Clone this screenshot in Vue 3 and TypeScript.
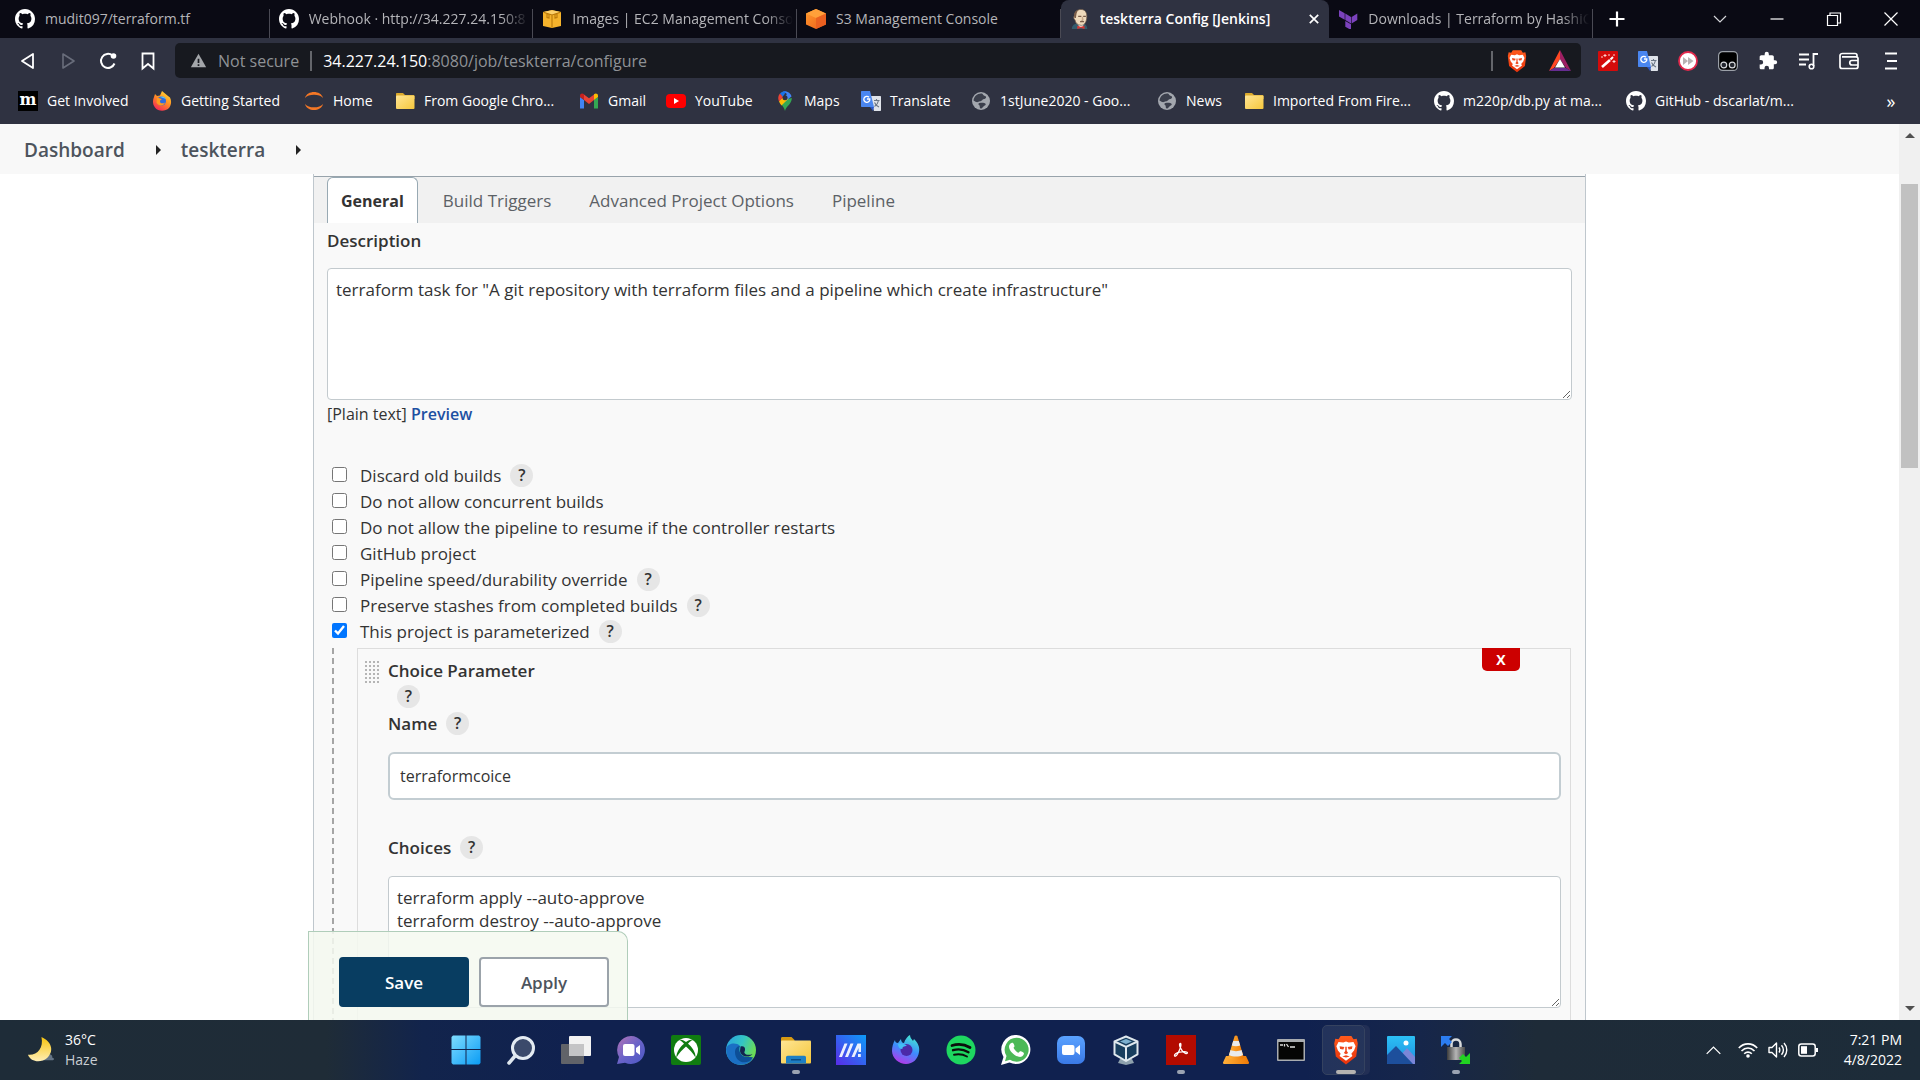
<script setup lang="ts">
import { ref } from 'vue'

interface BrowserTab { title: string; icon: string; active?: boolean; fade?: boolean }
interface Bookmark { label: string; icon: string }
interface Option { id: string; label: string; checked: boolean; help?: boolean }
interface TaskApp { name: string; icon: string; state?: 'open' | 'active' }

const browserTabs: BrowserTab[] = [
  { title: 'mudit097/terraform.tf', icon: 'github' },
  { title: 'Webhook · http://34.227.24.150:8', icon: 'github', fade: true },
  { title: 'Images | EC2 Management Conso', icon: 'ec2', fade: true },
  { title: 'S3 Management Console', icon: 's3' },
  { title: 'teskterra Config [Jenkins]', icon: 'jenkins', active: true },
  { title: 'Downloads | Terraform by HashiC', icon: 'terraform', fade: true },
]

const bookmarks: Bookmark[] = [
  { label: 'Get Involved', icon: 'mozilla' },
  { label: 'Getting Started', icon: 'firefox' },
  { label: 'Home', icon: 'jupyter' },
  { label: 'From Google Chro...', icon: 'folder' },
  { label: 'Gmail', icon: 'gmail' },
  { label: 'YouTube', icon: 'youtube' },
  { label: 'Maps', icon: 'maps' },
  { label: 'Translate', icon: 'translate' },
  { label: '1stJune2020 - Goo...', icon: 'globe' },
  { label: 'News', icon: 'globe' },
  { label: 'Imported From Fire...', icon: 'folder' },
  { label: 'm220p/db.py at ma...', icon: 'github' },
  { label: 'GitHub - dscarlat/m...', icon: 'github' },
]

const extensions: Bookmark[] = [
  { label: 'Magic wand', icon: 'wand' },
  { label: 'Google Translate', icon: 'translate' },
  { label: 'Fast forward', icon: 'forward-ext' },
  { label: 'Tampermonkey', icon: 'tamper' },
  { label: 'Extensions', icon: 'puzzle' },
  { label: 'Media', icon: 'music' },
  { label: 'Wallet', icon: 'wallet' },
  { label: 'Menu', icon: 'menu' },
]

const sections = ['General', 'Build Triggers', 'Advanced Project Options', 'Pipeline']
const section = ref('General')

const description = ref('terraform task for "A git repository with terraform files and a pipeline which create infrastructure"')
const options = ref<Option[]>([
  { id: 'discard', label: 'Discard old builds', checked: false, help: true },
  { id: 'concurrent', label: 'Do not allow concurrent builds', checked: false },
  { id: 'resume', label: 'Do not allow the pipeline to resume if the controller restarts', checked: false },
  { id: 'github-project', label: 'GitHub project', checked: false },
  { id: 'durability', label: 'Pipeline speed/durability override', checked: false, help: true },
  { id: 'stashes', label: 'Preserve stashes from completed builds', checked: false, help: true },
  { id: 'parameterized', label: 'This project is parameterized', checked: true, help: true },
])
const paramName = ref('terraformcoice')
const choices = ref('terraform apply --auto-approve\nterraform destroy --auto-approve')

const apps: TaskApp[] = [
  { name: 'Start', icon: 'windows' },
  { name: 'Search', icon: 'search' },
  { name: 'Task view', icon: 'taskview' },
  { name: 'Chat', icon: 'chat' },
  { name: 'Xbox', icon: 'xbox' },
  { name: 'Edge', icon: 'edge' },
  { name: 'File Explorer', icon: 'explorer', state: 'open' },
  { name: 'MyASUS', icon: 'asus' },
  { name: 'Firefox Developer Edition', icon: 'firefox-dev' },
  { name: 'Spotify', icon: 'spotify' },
  { name: 'WhatsApp', icon: 'whatsapp' },
  { name: 'Zoom', icon: 'zoom' },
  { name: 'VirtualBox', icon: 'virtualbox' },
  { name: 'Acrobat', icon: 'acrobat', state: 'open' },
  { name: 'VLC', icon: 'vlc' },
  { name: 'Command Prompt', icon: 'cmd' },
  { name: 'Brave', icon: 'brave', state: 'active' },
  { name: 'Photos', icon: 'photos' },
  { name: 'WinSCP', icon: 'winscp', state: 'open' },
]
</script>

<template>
  <div class="screen">
    <svg class="sprite" aria-hidden="true">
      <defs>
        <linearGradient id="g-win" x1="0" y1="0" x2="1" y2="1"><stop offset="0" stop-color="#7fdcff" /><stop offset="1" stop-color="#0a9cf5" /></linearGradient>
        <linearGradient id="g-fox" x1="0.8" y1="0" x2="0.2" y2="1"><stop offset="0" stop-color="#ffde3a" /><stop offset="0.45" stop-color="#ff9022" /><stop offset="1" stop-color="#f5205b" /></linearGradient>
        <linearGradient id="g-folder" x1="0" y1="0" x2="1" y2="1"><stop offset="0" stop-color="#ffe594" /><stop offset="1" stop-color="#f5c73c" /></linearGradient>
        <linearGradient id="g-chat" x1="0" y1="0" x2="1" y2="1"><stop offset="0" stop-color="#b573b5" /><stop offset="0.5" stop-color="#6a63c8" /><stop offset="1" stop-color="#4a57c4" /></linearGradient>
        <linearGradient id="g-edge" x1="0" y1="0" x2="1" y2="0.4"><stop offset="0" stop-color="#2a9fe2" /><stop offset="0.55" stop-color="#33c5c5" /><stop offset="1" stop-color="#6bdc57" /></linearGradient>
        <linearGradient id="g-asus" x1="0" y1="1" x2="1" y2="0"><stop offset="0" stop-color="#5a2be8" /><stop offset="1" stop-color="#0c9cf8" /></linearGradient>
        <linearGradient id="g-dev" x1="0.7" y1="0" x2="0.3" y2="1"><stop offset="0" stop-color="#45e8d0" /><stop offset="0.5" stop-color="#3d8bff" /><stop offset="1" stop-color="#b935e8" /></linearGradient>
        <linearGradient id="g-zoom" x1="0" y1="0" x2="0" y2="1"><stop offset="0" stop-color="#5aa2ff" /><stop offset="1" stop-color="#3a79e6" /></linearGradient>
        <linearGradient id="g-moon" x1="0" y1="0" x2="0" y2="1"><stop offset="0" stop-color="#f7c40c" /><stop offset="1" stop-color="#ffeeb5" /></linearGradient>
        <linearGradient id="g-cube" x1="0" y1="0" x2="1" y2="1"><stop offset="0" stop-color="#ff9c2e" /><stop offset="1" stop-color="#ee5d1a" /></linearGradient>
        <linearGradient id="g-cone" x1="0" y1="0" x2="1" y2="0"><stop offset="0" stop-color="#ffb03a" /><stop offset="1" stop-color="#ee7a06" /></linearGradient>
        <linearGradient id="g-brave" x1="0" y1="0" x2="0" y2="1"><stop offset="0" stop-color="#ff5a1c" /><stop offset="1" stop-color="#e8330c" /></linearGradient>
        <linearGradient id="g-lock" x1="0" y1="0" x2="1" y2="0"><stop offset="0" stop-color="#3c3c3c" /><stop offset="0.5" stop-color="#b5b5b5" /><stop offset="1" stop-color="#4a4a4a" /></linearGradient>
        <linearGradient id="g-photo" x1="0" y1="0" x2="0" y2="1"><stop offset="0" stop-color="#2cc0f5" /><stop offset="1" stop-color="#1e8ee0" /></linearGradient>
      </defs>

      <symbol id="github" viewBox="0 0 16 16"><path fill="#fff" d="M8 0C3.58 0 0 3.58 0 8c0 3.54 2.29 6.53 5.47 7.59.4.07.55-.17.55-.38 0-.19-.01-.82-.01-1.49-2.01.37-2.53-.49-2.69-.94-.09-.23-.48-.94-.82-1.13-.28-.15-.68-.52-.01-.53.63-.01 1.08.58 1.23.82.72 1.21 1.87.87 2.33.66.07-.52.28-.87.51-1.07-1.78-.2-3.64-.89-3.64-3.95 0-.87.31-1.59.82-2.15-.08-.2-.36-1.02.08-2.12 0 0 .67-.21 2.2.82.64-.18 1.32-.27 2-.27s1.36.09 2 .27c1.53-1.04 2.2-.82 2.2-.82.44 1.1.16 1.92.08 2.12.51.56.82 1.27.82 2.15 0 3.07-1.87 3.75-3.65 3.95.29.25.54.73.54 1.48 0 1.07-.01 1.93-.01 2.2 0 .21.15.46.55.38A8.01 8.01 0 0 0 16 8c0-4.42-3.58-8-8-8z" /></symbol>
      <symbol id="ec2" viewBox="0 0 20 20"><path fill="#f5b32c" d="M1 3l9-2 9 2v14l-9 2-9-2z" /><path fill="#fcd06a" d="M1.500 3L10 1.200 18.500 3 10 6z" /><path fill="none" stroke="#b9780a" stroke-width="1.100" d="M1.500 3.200L10 6l8.500-2.800M10 6v12.500M5 4.500v4l2 .500V5M15 4.500v4l-2 .500V5" /></symbol>
      <symbol id="s3" viewBox="0 0 20 20"><path fill="url(#g-cube)" d="M10 0l10 4.500v11L10 20 0 15.500v-11z" /><path fill="#ffa03a" d="M10 0l10 4.500L10 9 0 4.500z" /><path fill="#e95d20" d="M10 9l10-4.500v11L10 20z" opacity=".8" /></symbol>
      <symbol id="jenkins" viewBox="0 0 20 22"><path fill="#335b6c" d="M1 22c0-4 3-6 7-6h5c3 0 5 3 5 6z" /><path fill="#fff" d="M8 16h6l-1 5H9z" /><path fill="#eed9bb" stroke="#6b5847" stroke-width=".8" d="M4 7c0-4 3-6.500 7-6.500S17.500 3 17.500 8c0 6-2.500 10-6 10C7 18 5 15 4.500 12 2.500 11 3 8 4 7z" /><path fill="#7a5c48" d="M4 10C2.500 5 5 1.500 8.500 1 6 3 6 6 5.500 10zM8 7.500h3.500v1.300H8zM13.500 7.500h3v1.300h-3zM10 13.500c2-1 3-1 4.500 0v1H10z" /><path fill="#c9a98a" d="M12 8.500h1.200l.8 3.500h-2z" /><path fill="#d33833" d="M7 18.500l4 1 4-1v3.500l-4-1-4 1z" /></symbol>
      <symbol id="terraform" viewBox="0 0 20 20"><path fill="#7b42bc" d="M1 1l5.700 3.200v6.500L1 7.500zM7.300 4.600L13 7.900v6.500l-5.700-3.300zM13.600 7.900l5.700-3.300v6.500l-5.700 3.300zM7.300 12l5.700 3.300V21l-5.700-3.300z" /></symbol>
      <symbol id="firefox" viewBox="0 0 20 20"><path fill="url(#g-fox)" d="M2 6l1-3 2 2 3-.500L10 0c2 2 4 3 6 5l2 1.500c2 4 1 8-1 10.500-4 4-11 3.500-14-.500C.500 13.500.500 9 2 6z" /><circle cx="9.500" cy="10" r="4.500" fill="#2d6be0" /><path fill="#ff9b1e" d="M5 7c2 0 3 .500 5 1-1 1-2 1-2 2.500 0 2 3 2.500 5 1-1 4-7 4-8.500 0z" /><path fill="#58c8f8" d="M8 6c2-1.500 5 0 6 2-2-1-4-1-6-2z" /></symbol>
      <symbol id="jupyter" viewBox="0 0 20 20"><path fill="#f37726" d="M1 7C2 3 6 1 10 1s8 2 9 6c-2-2.500-5-3.300-9-3.300S3 4.500 1 7zM1 13c1 4 5 6 9 6s8-2 9-6c-2 2.500-5 3.300-9 3.300S3 15.500 1 13z" /></symbol>
      <symbol id="folder" viewBox="0 0 20 20"><path fill="#dcaa2c" d="M1 3c0-.600.400-1 1-1h6l2 2h8.500c.500 0 1 .500 1 1v3H1z" /><rect x="1" y="4.500" width="18.500" height="13.500" rx="1" fill="url(#g-folder)" /></symbol>
      <symbol id="gmail" viewBox="0 0 20 16"><path fill="#4285f4" d="M1 15.500h4V7L1 4z" /><path fill="#34a853" d="M15 15.500h4V4l-4 3z" /><path fill="#ea4335" d="M5 7V1.500l5 3.800 5-3.800V7l-5 4z" /><path fill="#c5221f" d="M1 4V2.500C1 .500 3.500-.200 5 1.200V7z" /><path fill="#fbbc04" d="M19 4V2.500c0-2-2.500-2.700-4-1.300V7z" /></symbol>
      <symbol id="youtube" viewBox="0 0 20 20"><rect y="3" width="20" height="14" rx="4" fill="#f00" /><path fill="#fff" d="M8 7l5 3-5 3z" /></symbol>
      <symbol id="maps" viewBox="0 0 20 20"><path fill="#34a853" d="M4 10c1 3 5 5 6 10 1-5 7-7 6.800-13z" /><path fill="#4285f4" d="M8 .500c4-1 8 2 8.500 5L7 13l-2-2L12 3z" /><path fill="#fbbc04" d="M4 10l5-5 4 3-6.500 6.500C5.500 13 4.500 12 4 10z" /><path fill="#ea4335" d="M5 2.500L8.500 6 4 10.500C2.500 7 3.500 4 5 2.500z" /><path fill="#1a73e8" d="M5 2.500C6.500.700 9 0 11 .200L8 6z" /><circle cx="10" cy="6.800" r="2.500" fill="#2c3040" /></symbol>
      <symbol id="translate" viewBox="0 0 20 20"><path fill="#dfe3ea" d="M8 5h11c.600 0 1 .400 1 1v13c0 .600-.400 1-1 1h-6z" /><path fill="#4a86f0" d="M1 0h8l4 16H1c-.600 0-1-.400-1-1V1c0-.600.400-1 1-1z" /><path fill="#2a56c6" d="M9 16h4l-1 4z" /><path fill="none" stroke="#fff" stroke-width="1.300" d="M8 6.300A3 3 0 1 0 8.800 8H6" /><path fill="none" stroke="#6b7685" stroke-width="1.100" d="M13 9.500h5.500M15.500 8v1.500M17.500 9.500c-.500 3-2.500 5-4 6M13.500 11.500c1 2 2.500 3.500 4.500 4.500" /></symbol>
      <symbol id="globe" viewBox="0 0 20 20"><circle cx="10" cy="10" r="9" fill="#a3a7ae" /><path fill="#3b3f4c" d="M11 2.500c1.500 1 1 2 3 2.500 2 .500 1 3-1 3-2 .300-1.500 2-4 2.300-1.500.200-2 1.200-4 .700L2.500 9.500C3 5 6.500 2 11 2.500zM8.500 12c2-.500 5-.500 6 .800 1 1.200-1 1.700-2 2.700S10.500 18 9.500 17.500C8 16.500 9.500 15 8 14c-1-.600-.700-1.700.500-2z" /></symbol>

      <symbol id="back" viewBox="0 0 20 20"><path fill="none" stroke="#fff" stroke-width="1.800" stroke-linejoin="round" d="M15 3L4 10l11 7z" /></symbol>
      <symbol id="next" viewBox="0 0 20 20"><path fill="none" stroke="#696d7b" stroke-width="1.600" stroke-linejoin="round" d="M5 3l11 7-11 7z" /></symbol>
      <symbol id="reload" viewBox="0 0 20 20"><path fill="none" stroke="#fff" stroke-width="2" d="M16.500 12.500A7 7 0 1 1 14.500 4.500" /><circle cx="15.500" cy="5" r="2.800" fill="#fff" /></symbol>
      <symbol id="bookmark" viewBox="0 0 20 20"><path fill="none" stroke="#fff" stroke-width="1.800" d="M4.500 2.500h11v15L10 13l-5.500 4.500z" /></symbol>
      <symbol id="warning" viewBox="0 0 20 20"><path fill="#a3a6aa" d="M10 2l9 16H1z" /><path fill="#17191f" d="M9 8h2v5H9zM9 14.500h2v2H9z" /></symbol>
      <symbol id="brave" viewBox="0 0 24 28"><path fill="url(#g-brave)" d="M7 1h10l2 3 3-.500L23 8l-1.500 12L12 27.500 2.500 20 1 8l1-4.500L5 4z" /><path fill="#fff" d="M5 6.500l4.500.500L12 6l2.500 1 4.500-.500 2 4-1.500 4-2.500 3 1 2L12 24l-6-4.500 1-2-2.500-3-1.500-4z" /><path fill="#f0461a" d="M6 10.500l4.500.800-1 2.200-3-.500zM18 10.500l-4.500.800 1 2.200 3-.500zM11.300 11h1.400v4l1.300 1.800-2 1.200-2-1.200 1.300-1.800zM8.500 20l3.500-1.200 3.500 1.200-3.500 1z" /></symbol>
      <symbol id="bat" viewBox="0 0 22 22"><path fill="#ff4724" d="M11 0L0 21l5-3 6-9z" /><path fill="#9e1f63" d="M11 0l11 21-5-3-6-9z" /><path fill="#662d91" d="M0 21h22l-5-3H5z" /><path fill="#fff" d="M11 9l5 8.500H6z" /></symbol>
      <symbol id="wand" viewBox="0 0 20 20"><rect width="20" height="20" rx="1" fill="#d40b0b" /><path stroke="#fff" stroke-width="2.600" d="M4 16l8-7" /><path stroke="#fff" stroke-width="2" d="M12.500 8.500L15 6" /><path stroke="#ffd3d3" d="M7 3v3M5.500 4.500h3M11 3v2M16 9v3M14.500 10.500h3M3 6h2M16 3v2" /></symbol>
      <symbol id="forward-ext" viewBox="0 0 20 20"><circle cx="10" cy="10" r="9" fill="#fff" stroke="#e3294c" stroke-width="1.800" /><path fill="#b9b3b3" d="M5 6l5 4-5 4zM10 6l5.500 4-5.500 4z" /></symbol>
      <symbol id="tamper" viewBox="0 0 20 20"><rect x=".600" y=".600" width="18.800" height="18.800" rx="4" fill="#000" stroke="#9ba0a8" stroke-width="1.200" /><circle cx="5.800" cy="14" r="2.900" fill="#23262e" stroke="#d7d9dc" stroke-width="1.200" /><circle cx="14.200" cy="14" r="2.900" fill="#23262e" stroke="#d7d9dc" stroke-width="1.200" /></symbol>
      <symbol id="puzzle" viewBox="0 0 24 24"><path fill="#fff" d="M20.500 11H19V7c0-1.100-.900-2-2-2h-4V3.500a2.500 2.500 0 0 0-5 0V5H4c-1.100 0-2 .900-2 2v3.800h1.500a2.700 2.700 0 0 1 0 5.400H2V20c0 1.100.900 2 2 2h3.800v-1.500a2.700 2.700 0 0 1 5.400 0V22H17c1.100 0 2-.900 2-2v-4h1.500a2.500 2.500 0 0 0 0-5z" /></symbol>
      <symbol id="music" viewBox="0 0 20 20"><path fill="none" stroke="#fff" stroke-width="1.800" d="M1 3.500h10M1 8.500h10M1 13.500h7M15.500 15V3H20" /><circle cx="13.500" cy="15.500" r="2.300" fill="none" stroke="#fff" stroke-width="1.600" /></symbol>
      <symbol id="wallet" viewBox="0 0 20 20"><path fill="none" stroke="#fff" stroke-width="1.700" stroke-linejoin="round" d="M18 6V4.500C18 3 17 2.500 16 2.500H3.500C2 2.500 1 3.500 1 4.500v11c0 1.300 1 2 2 2h14c1.300 0 2-.700 2-2V7.500c0-1-.700-1.700-2-1.700H3M19 9.500h-6a2.200 2.200 0 0 0 0 4.500h6" /></symbol>
      <symbol id="menu" viewBox="0 0 20 20"><path stroke="#fff" stroke-width="1.800" d="M4 2.500h12M6 10h10M4 17.500h12" /></symbol>
      <symbol id="plus" viewBox="0 0 20 20"><path stroke="#fff" stroke-width="2.200" d="M10 2.500v15M2.500 10h15" /></symbol>
      <symbol id="chevron-down" viewBox="0 0 20 20"><path fill="none" stroke="#d5d6da" stroke-width="1.200" d="M4 7l6 6 6-6" /></symbol>
      <symbol id="minimise" viewBox="0 0 20 20"><path stroke="#fff" stroke-width="1.200" d="M3.500 10h13" /></symbol>
      <symbol id="restore" viewBox="0 0 20 20"><path fill="none" stroke="#fff" stroke-width="1.200" d="M3.500 6.500h10v10h-10zM6 6.500v-2.500h10.500v10h-3" /></symbol>
      <symbol id="close" viewBox="0 0 20 20"><path stroke="#fff" stroke-width="1.200" d="M3.500 3.500l13 13M16.500 3.500l-13 13" /></symbol>
      <symbol id="tab-close" viewBox="0 0 20 20"><path stroke="#fff" stroke-width="2.800" d="M3 3l14 14M17 3L3 17" /></symbol>

      <symbol id="windows" viewBox="0 0 30 30"><path fill="url(#g-win)" d="M2 .500h12.500V14H.500V2zM15.500.500h12.500l1.500 1.500v12H15.500zM.500 15h14v14.500H2L.500 28zM15.500 15h14v13L28 29.500H15.500z" /></symbol>
      <symbol id="search" viewBox="0 0 30 30"><circle cx="17" cy="13" r="10.500" fill="#3b4a6b" stroke="#e4ebf2" stroke-width="3" /><path stroke="#dfe7ee" stroke-width="3.500" stroke-linecap="round" d="M9 21l-6 7" /></symbol>
      <symbol id="taskview" viewBox="0 0 30 30"><rect x="8" y="1" width="22" height="20" rx="1" fill="#f2f2f2" /><rect x="0" y="9" width="23" height="20" rx="1" fill="#6a6a6c" fill-opacity=".9" /><rect x="8" y="9" width="15" height="12" fill="#c4c4c6" /></symbol>
      <symbol id="chat" viewBox="0 0 30 30"><path fill="url(#g-chat)" d="M15 1a14 14 0 1 1-6 26.700L1 29l2-7A14 14 0 0 1 15 1z" /><rect x="7" y="9" width="11.500" height="12" rx="2" fill="#fff" /><path fill="#fff" d="M20 13l4-3v10l-4-3z" /></symbol>
      <symbol id="xbox" viewBox="0 0 30 30"><rect width="30" height="30" rx="2" fill="#107c10" /><circle cx="15" cy="15" r="12" fill="#fff" /><path fill="#107c10" d="M8 5c3-1 5 .500 7 2 2-1.500 4-3 7-2-2 .500-3.500 2-5 3.800C21 12 25 18 24.500 22.500 22 18 18 14 15 11.500 12 14 8 18 5.500 22.500 5 18 9 12 13 8.800 11.500 7 10 5.500 8 5z" /></symbol>
      <symbol id="edge" viewBox="0 0 30 30"><circle cx="15" cy="15" r="15" fill="url(#g-edge)" /><path fill="#1b6fc4" d="M0 14c2-6 10-7 14-3-5 3-4 10 1 13 4 2.500 9 1.500 12-.500C22 32 5 33 1 20z" /><path fill="#0d4f97" d="M9 17c0-3 2-6 5-6-2 5 1 11 8 11 2 0 4-.500 5 .500-5 8-18 6-18-5.500z" /><path fill="#13244f" d="M14.500 11.500c3-1 5 1 4.500 3.500-.200 1.500-1 2-.500 3 1 2 5 2.500 8 1-4 5-12 2-12.500-3z" /></symbol>
      <symbol id="explorer" viewBox="0 0 30 30"><path fill="#d79a13" d="M0 3.500C0 2.500.500 2 1.500 2h9l3 3V9H0z" /><rect y="5.500" width="30" height="23" rx="1" fill="url(#g-folder)" /><path fill="#1e7fc4" d="M5 28.500v-6c0-1 .700-1.700 1.700-1.700h16.600c1 0 1.700.700 1.700 1.700v6z" /><rect x="10" y="24" width="10" height="1.500" fill="#0b4c85" /></symbol>
      <symbol id="asus" viewBox="0 0 30 30"><rect width="30" height="30" fill="url(#g-asus)" /><path fill="#fff" d="M3 22L8.500 8.500h3L6 22zM9 22l5.500-13.500h3L12 22zM15.500 22L21.500 8.500H25V17h-2.500v-4L18.500 22zM22 19h2.800v3H22z" opacity=".9" /></symbol>
      <symbol id="firefox-dev" viewBox="0 0 30 30"><path fill="url(#g-dev)" d="M4 5c0 2 1 3 3 3l3-4c0 2 1 4 3 4C14 4 17 1 19 0c0 3 2 4 3 6l1-2c4 4 6 8 5 13-1 7-6 12-13 12S1 23 1 16c0-4 1-8 3-11z" /><circle cx="15.500" cy="15" r="6" fill="#4b2aa8" /><path fill="#43bdf5" d="M7 9c4-1 7 0 9 2-3 0-5 1-4.500 3-3 0-4.500-2-4.500-5z" /></symbol>
      <symbol id="spotify" viewBox="0 0 30 30"><circle cx="15" cy="15" r="14.500" fill="#1ed760" /><path fill="none" stroke="#0b0f0c" stroke-linecap="round" d="M6 10.500c6-2 13-1 18 2" stroke-width="2.800" /><path fill="none" stroke="#0b0f0c" stroke-linecap="round" d="M7 15.200c5-1.500 11-.700 15.500 2" stroke-width="2.300" /><path fill="none" stroke="#0b0f0c" stroke-linecap="round" d="M8 19.700c4.500-1 9-.500 13 1.800" stroke-width="1.900" /></symbol>
      <symbol id="whatsapp" viewBox="0 0 30 30"><path fill="#fff" d="M15.500 0a14.500 14.500 0 1 1-7 27.500L0 30l2.500-8A14.500 14.500 0 0 1 15.500 0z" /><path fill="#4cb957" d="M15.500 2.700a12 12 0 1 1-6.500 22l-5 1.500L5.500 21a12 12 0 0 1 10-18.300z" /><path fill="#fff" d="M10.500 8c1-.500 2 0 2.500 1.500.700 1.800.700 2-.500 3.300 1.200 2.500 2.800 4 5 5 1.200-1.800 1.700-2 3-1.300 2.200 1 2.700 1.300 2.300 2.800-.600 2-3 3-5 2.500-5-1-9.500-6-9.800-10 0-1.700 1-3.200 2.500-3.800z" /></symbol>
      <symbol id="zoom" viewBox="0 0 30 30"><rect x="1" y="1" width="28" height="28" rx="7" fill="url(#g-zoom)" /><rect x="6" y="10" width="12.500" height="10" rx="2" fill="#fff" /><path fill="#fff" d="M19.500 13.500L24 10v10l-4.500-3.500z" /></symbol>
      <symbol id="virtualbox" viewBox="0 0 30 30"><path fill="#8da0ad" d="M9 24h12l2 4-8 2-8-2z" /><path fill="#183e5e" stroke="#dfe8ee" stroke-width="2" stroke-linejoin="round" d="M15 1.500l11.500 4.800v13L15 26 3.500 19.300v-13z" /><path fill="none" stroke="#dfe8ee" stroke-width="2" d="M3.500 6.500L15 12l11.500-5.500M15 12v14" /><path fill="#7db0cf" d="M15 4l6 2.500-6 2.500-6-2.500z" /></symbol>
      <symbol id="acrobat" viewBox="0 0 30 30"><rect width="30" height="30" fill="#b30b00" /><path fill="none" stroke="#fff" stroke-width="1.300" d="M14.500 8.500c-1.500 0-1 2.500 0 4.500 1 2.500 3 4.500 5 5.500 1.500.500 2.500-.500 1.500-1.300-1.500-1-5-.600-7.500 0s-5 2-5 3.300 1.800.700 3-1.500 3-6 3.300-8c.200-1.500 0-2.500-.300-2.500z" /></symbol>
      <symbol id="vlc" viewBox="0 0 30 30"><path fill="url(#g-cone)" d="M5 21h20l3 6.500c.200.700-.200 1.500-1 1.500H3c-.800 0-1.200-.800-1-1.500z" /><path fill="url(#g-cone)" d="M13.500 1.500c.500-1.500 2.500-1.500 3 0L23 23c-4 2.500-12 2.500-16 0z" /><path fill="#e9eaec" d="M12.200 6h5.600l1.400 4.500c-2.500 1-6 1-8.400 0zM9.500 15c3 1.500 8 1.500 11 0l1.500 5c-4 2-10 2-14 0z" /></symbol>
      <symbol id="cmd" viewBox="0 0 30 30"><rect x="1" y="4" width="28" height="22" rx="1" fill="#a9acb0" /><rect x="2.500" y="7" width="25" height="17.500" fill="#050505" /><path stroke="#dcdcdc" stroke-width="1.300" d="M4 10h3M8.500 9v2.500M10.500 9l2 3M14 12h5" /></symbol>
      <symbol id="photos" viewBox="0 0 30 30"><rect x="1" y="1" width="28" height="28" rx="1" fill="url(#g-photo)" /><path fill="#7a86d8" d="M13 22l8-9 8 9v7H13z" /><path fill="#1d4f9c" d="M1 20l9-9 17 18H2c-.600 0-1-.400-1-1z" /><circle cx="20" cy="8" r="2.500" fill="#fff" /></symbol>
      <symbol id="winscp" viewBox="0 0 30 30"><path fill="none" stroke="#d9dbdd" stroke-width="2.500" d="M10.500 14V9c0-6 9-6 9 0v5" /><rect x="6" y="12" width="18" height="13" fill="url(#g-lock)" /><path fill="#2c7df0" d="M0 1h11L8 4l3 3-4 4-3-3-4 4z" /><path fill="#21d321" d="M29 29H18l3-3-3-3 4-4 3 3 4-4z" /></symbol>
      <symbol id="moon" viewBox="0 0 30 30"><path fill="#75879a" d="M16 26c-1-3 3-6 6-5 1-3 6-1 5 2 3 1 2 3 0 3z" opacity=".8" /><path fill="url(#g-moon)" d="M15.500 1c11 5 14 15 6 22.500C15 29 4 28 1 20c10 1 17-7 14.500-19z" /></symbol>
      <symbol id="chevron-up" viewBox="0 0 20 20"><path fill="none" stroke="#fff" stroke-width="1.500" d="M2 14l8-8 8 8" /></symbol>
      <symbol id="wifi" viewBox="0 0 20 20"><path fill="none" stroke="#fff" stroke-width="1.600" d="M.800 8c5-5.500 13.400-5.500 18.400 0M3.500 11c3.800-4 9.200-4 13 0M6.200 13.800c2.300-2.300 5.300-2.300 7.600 0" /><circle cx="10" cy="16" r="1.800" fill="#fff" /></symbol>
      <symbol id="volume" viewBox="0 0 20 20"><path fill="none" stroke="#fff" stroke-width="1.400" stroke-linejoin="round" d="M1 7.500h3l4.500-4.500v14L4 12.500H1zM11 7.500c1 1.500 1 3.500 0 5M13.500 5.300c2.300 2.800 2.300 6.600 0 9.400M16 3c3.700 4 3.700 10 0 14" /></symbol>
      <symbol id="battery" viewBox="0 0 20 20"><rect x=".800" y="4" width="16.400" height="12" rx="2.500" fill="none" stroke="#fff" stroke-width="1.500" /><rect x="3" y="6.200" width="6" height="7.600" fill="#fff" /><path fill="#fff" d="M18 8h2v4h-2z" /></symbol>
    </svg>

    <header class="browser">
      <div class="tabstrip">
        <div class="tabs" role="tablist">
          <button v-for="t in browserTabs" :key="t.title" type="button" role="tab" class="tab" :class="{ active: t.active }" :aria-selected="!!t.active">
            <svg class="icon20"><use :href="'#' + t.icon" /></svg>
            <span class="tab-title" :class="{ fade: t.fade }">{{ t.title }}</span>
            <svg v-if="t.active" class="icon12"><use href="#tab-close" /></svg>
          </button>
        </div>
        <button type="button" class="plain new-tab" aria-label="New tab"><svg class="icon20"><use href="#plus" /></svg></button>
        <div class="window-controls">
          <button type="button" class="plain" aria-label="Search tabs"><svg class="icon20"><use href="#chevron-down" /></svg></button>
          <button type="button" class="plain" aria-label="Minimise"><svg class="icon20"><use href="#minimise" /></svg></button>
          <button type="button" class="plain" aria-label="Restore"><svg class="icon20"><use href="#restore" /></svg></button>
          <button type="button" class="plain" aria-label="Close"><svg class="icon20"><use href="#close" /></svg></button>
        </div>
      </div>

      <div class="toolbar">
        <nav class="nav-buttons">
          <button type="button" class="plain" aria-label="Back"><svg class="icon20"><use href="#back" /></svg></button>
          <button type="button" class="plain" aria-label="Forward"><svg class="icon20"><use href="#next" /></svg></button>
          <button type="button" class="plain" aria-label="Reload"><svg class="icon20"><use href="#reload" /></svg></button>
          <button type="button" class="plain" aria-label="Bookmark"><svg class="icon20"><use href="#bookmark" /></svg></button>
        </nav>
        <div class="address">
          <svg class="icon17"><use href="#warning" /></svg>
          <span class="insecure">Not secure</span>
          <span class="bar"></span>
          <span class="url"><b>34.227.24.150</b>:8080/job/teskterra/configure</span>
          <span class="bar end"></span>
          <svg class="shield"><use href="#brave" /></svg>
          <svg class="bat"><use href="#bat" /></svg>
        </div>
        <div class="extensions">
          <button v-for="e in extensions" :key="e.label" type="button" class="plain" :aria-label="e.label">
            <svg class="icon20"><use :href="'#' + e.icon" /></svg>
          </button>
        </div>
      </div>

      <nav class="bookmarks">
        <a v-for="b in bookmarks" :key="b.label" href="#" class="bookmark">
          <span v-if="b.icon === 'mozilla'" class="mozilla" aria-hidden="true">m</span>
          <svg v-else class="icon20"><use :href="'#' + b.icon" /></svg>
          <span>{{ b.label }}</span>
        </a>
        <button type="button" class="plain more" aria-label="More bookmarks">»</button>
      </nav>
    </header>

    <div class="viewport">
      <div class="page">
        <nav class="breadcrumbs">
          <a href="#">Dashboard</a><span class="arrow"></span>
          <a href="#">teskterra</a><span class="arrow"></span>
        </nav>

        <main class="content">
          <form class="panel" @submit.prevent>
            <div class="sections">
              <button v-for="s in sections" :key="s" type="button" class="section" :class="{ current: s === section }" @click="section = s">{{ s }}</button>
            </div>
            <div class="body">
              <label class="heading" for="description">Description</label>
              <textarea id="description" v-model="description" class="area"></textarea>
              <p class="preview">[Plain text] <a href="#">Preview</a></p>

              <div class="options">
                <div v-for="o in options" :key="o.id" class="option">
                  <input :id="o.id" v-model="o.checked" type="checkbox">
                  <label :for="o.id">{{ o.label }}</label>
                  <button v-if="o.help" type="button" class="help" :aria-label="'Help for ' + o.label">?</button>
                </div>
              </div>

              <div class="nested">
                <div class="parameter">
                  <span class="grip"></span>
                  <button type="button" class="remove">X</button>
                  <h3 class="heading">Choice Parameter</h3>
                  <div class="row"><button type="button" class="help" aria-label="Help for Choice Parameter">?</button></div>
                  <div class="row"><label class="heading" for="param-name">Name</label><button type="button" class="help" aria-label="Help for Name">?</button></div>
                  <input id="param-name" v-model="paramName" type="text" class="field">
                  <div class="row"><label class="heading" for="choices">Choices</label><button type="button" class="help" aria-label="Help for Choices">?</button></div>
                  <textarea id="choices" v-model="choices" class="area"></textarea>
                </div>
              </div>
            </div>
          </form>
          <div class="actions">
            <button type="button" class="save">Save</button>
            <button type="button" class="apply">Apply</button>
          </div>
        </main>
      </div>
      <div class="scrollbar"><span class="up"></span><span class="thumb"></span><span class="down"></span></div>
    </div>

    <footer class="taskbar">
      <div class="weather">
        <svg class="icon28"><use href="#moon" /></svg>
        <div><div>36°C</div><div class="dim">Haze</div></div>
      </div>
      <div class="apps">
        <button v-for="a in apps" :key="a.name" type="button" class="app" :class="a.state" :aria-label="a.name">
          <svg class="icon30"><use :href="'#' + a.icon" /></svg>
        </button>
      </div>
      <div class="tray">
        <svg class="icon17"><use href="#chevron-up" /></svg>
        <svg class="icon20"><use href="#wifi" /></svg>
        <svg class="icon20"><use href="#volume" /></svg>
        <svg class="icon20"><use href="#battery" /></svg>
        <div class="clock"><div>7:21 PM</div><div>4/8/2022</div></div>
      </div>
    </footer>
  </div>
</template>

<style>
body { margin: 0; }
</style>

<style scoped>
.screen {
  display: flex;
  flex-direction: column;
  height: 100vh;
  overflow: hidden;
  font-family: "Open Sans", "Noto Sans", sans-serif;
  font-size: 16px;
  color: #333;
  background: #fff;
}
*, *::before, *::after { box-sizing: border-box; }
button, input, textarea { font-family: inherit; }
svg { flex: none; display: block; }
a { text-decoration: none; }
.sprite { position: absolute; width: 0; height: 0; }
.icon12 { width: 12px; height: 12px; }
.icon17 { width: 17px; height: 17px; }
.icon20 { width: 20px; height: 20px; }
.icon28 { width: 28px; height: 28px; }
.icon30 { width: 30px; height: 30px; }
.plain {
  display: flex;
  align-items: center;
  justify-content: center;
  padding: 0;
  border: 0;
  background: none;
  color: #fff;
}

.browser { flex: none; background: #2f3241; color: #fff; font-size: 14px; }
.tabstrip { display: flex; height: 38px; padding-left: 6px; background: #0a0a14; }
.tabs { display: flex; flex: 0 1 1587px; min-width: 0; }
.tab {
  display: flex;
  flex: 1 1 0;
  align-items: center;
  gap: 10px;
  min-width: 0;
  padding: 0 4px 1px 9px;
  border: 0;
  background: linear-gradient(#4a4a54, #4a4a54) right bottom / 1px 29px no-repeat;
  color: #b4b4b8;
  font-size: 14px;
  text-align: left;
}
.tab.active { padding-right: 9px; border-radius: 8px 8px 0 0; background: #2f3241; color: #fff; font-weight: 600; }
.tab-title { flex: 1; min-width: 0; overflow: hidden; white-space: nowrap; }
.tab-title.fade { mask-image: linear-gradient(90deg, #000 calc(100% - 28px), transparent); }
.new-tab { width: 48px; }
.window-controls { display: flex; margin-left: auto; padding-right: 1px; }
.window-controls button { width: 57px; }

.toolbar { display: flex; align-items: center; height: 45px; }
.nav-buttons { display: flex; width: 175px; padding-left: 8px; }
.nav-buttons button { width: 40px; }
.address {
  display: flex;
  flex: 1;
  align-items: center;
  min-width: 0;
  height: 35px;
  padding: 0 10px 0 15px;
  border-radius: 5px;
  background: #17191f;
  color: #8f9296;
  font-size: 16px;
}
.insecure { margin-left: 11px; white-space: nowrap; }
.bar { width: 2px; height: 20px; margin: 0 11px; background: #64666b; }
.url { white-space: nowrap; }
.url b { color: #fff; font-weight: 400; }
.bar.end { margin: 0 14px 0 auto; }
.shield { width: 20px; height: 24px; }
.bat { width: 22px; height: 22px; margin-left: 22px; }
.extensions { display: flex; padding: 0 8px 0 7px; }
.extensions button { width: 40px; }
.extensions button:nth-last-child(-n + 2) { width: 42px; }

.bookmarks {
  display: grid;
  grid-template-columns: 134px 152px 91px 184px 87px 109px 86px 110px 186px 87px 190px 192px 1fr 42px;
  align-items: center;
  height: 41px;
  padding: 0 8px 6px 18px;
}
.bookmark { display: flex; align-items: center; gap: 9px; color: #fff; white-space: nowrap; }
.mozilla {
  width: 20px;
  height: 20px;
  background: #000;
  font-family: "DejaVu Serif", serif;
  font-size: 16px;
  font-weight: 700;
  line-height: 18px;
  display: flex;
  justify-content: center;
}
.more { font-size: 18px; }

.viewport { display: flex; flex: 1; min-height: 0; }
.page { display: flex; flex: 1; flex-direction: column; min-width: 0; }
.breadcrumbs {
  display: flex;
  flex: none;
  align-items: center;
  height: 50px;
  padding: 1px 0 0 24px;
  background: #f8f8f8;
  font-size: 19px;
  font-weight: 600;
}
.breadcrumbs a { color: #4d545d; }
.arrow { margin: 0 20px 0 31px; border: 5px solid transparent; border-left-color: #222; border-right: 0; }

.content { position: relative; flex: 1; min-height: 0; padding: 0 313px; }
.panel {
  height: 100%;
  overflow: hidden;
  border: solid #bfc7cd;
  border-width: 0 1px;
  background: #f9f9f9;
}
.sections {
  display: flex;
  height: 47px;
  margin-top: 2px;
  padding-left: 13px;
  border-top: 1px solid #98a3ab;
  background: #f1f1f1;
}
.section {
  padding: 0 13px;
  border: 0;
  background: none;
  color: #5c6166;
  font-size: 17px;
}
.section + .section { margin-left: 12px; }
.section.current {
  border: solid #98a9b3;
  border-width: 1px 1px 0;
  border-radius: 6px 6px 0 0;
  background: #fff;
  color: #333;
  font-size: 16px;
  font-weight: 700;
}
.body { display: flex; flex-direction: column; padding: 6px 13px 0; }
.heading { margin: 0; font-size: 17px; font-weight: 600; line-height: 24px; }
.area {
  display: block;
  width: 100%;
  height: 132px;
  margin: 15px 0 0;
  padding: 9px 8px;
  border: 1px solid #c3cace;
  border-radius: 4px;
  background: #fff;
  color: #333;
  font-size: 17px;
  line-height: 23px;
  resize: vertical;
}
.preview { margin: 2px 0 0; font-size: 16px; line-height: 24px; }
.preview a { color: #1e50a2; font-weight: 600; }
.options { margin-top: 36px; font-size: 17px; }
.option { display: flex; align-items: center; height: 26px; }
.option input { width: 15px; height: 15px; margin: 0 13px 2px 5px; }
.help {
  flex: none;
  width: 23px;
  height: 23px;
  margin-left: 9px;
  padding: 0;
  border: 0;
  border-radius: 50%;
  background: #e6e6e6;
  color: #333;
  font-size: 16px;
  font-weight: 600;
  line-height: 23px;
}
.nested {
  margin: 4px 1px 0 5px;
  padding-left: 25px;
  background: repeating-linear-gradient(#a5a5a5 0 6px, transparent 6px 10px) left top / 2px 100% no-repeat;
}
.parameter { position: relative; padding: 10px 9px 40px 30px; border: 1px solid #ddd; }
.grip {
  position: absolute;
  top: 11px;
  left: 6px;
  width: 15px;
  height: 25px;
  background: radial-gradient(circle, #b5b5b5 1px, transparent 1px) 0 0 / 4px 4px;
}
.remove {
  position: absolute;
  top: -1px;
  right: 50px;
  width: 38px;
  height: 23px;
  padding: 0;
  border: 0;
  border-radius: 0 0 5px 5px;
  background: #c00;
  color: #fff;
  font-size: 14px;
  font-weight: 700;
}
.row { display: flex; align-items: center; height: 27px; }
.field {
  display: block;
  width: 100%;
  height: 48px;
  margin: 15px 0 34px;
  padding: 0 10px;
  border: 2px solid #c3cdd2;
  border-radius: 6px;
  background: #fff;
  color: #333;
  font-size: 16px;
}
.actions {
  position: absolute;
  bottom: 0;
  left: 308px;
  display: flex;
  gap: 10px;
  padding: 25px 18px 13px 30px;
  border: solid #b0cdba;
  border-width: 1px 1px 0;
  border-radius: 0 10px 0 0;
  background: rgba(245, 249, 240, 0.85);
}
.actions button { width: 130px; height: 50px; border: 2px solid #9ba3aa; border-radius: 4px; background: #fff; color: #4d545d; font-size: 17px; font-weight: 600; }
.actions .save { border-color: #083d61; background: #083d61; color: #fff; }

.scrollbar { display: flex; flex: none; flex-direction: column; align-items: center; width: 21px; padding: 9px 0; background: #f0f0f0; }
.up, .down { border: 5px solid transparent; }
.up { border-top: 0; border-bottom-color: #505050; }
.down { margin-top: auto; border-bottom: 0; border-top-color: #505050; }
.thumb { width: 17px; height: calc(32.5% - 1px); margin-top: 46px; background: #c1c1c1; }

.taskbar {
  display: flex;
  flex: none;
  align-items: center;
  height: 60px;
  background: linear-gradient(90deg, #1e2c38 0%, #1f2c37 17%, #12244c 22%, #10214f 30%, #10214f 68%, #16264a 74%, #1e2b38 80%, #1d2c39 100%);
  color: #fff;
  font-size: 14px;
  line-height: 20px;
}
.weather { display: flex; flex: 1; align-items: center; gap: 10px; padding-left: 27px; }
.dim { color: #c9ced3; }
.apps { display: flex; margin-right: 8px; }
.app {
  position: relative;
  display: flex;
  align-items: center;
  justify-content: center;
  width: 55px;
  height: 60px;
  padding: 0;
  border: 0;
  background: none;
}
.app.active::before {
  content: "";
  position: absolute;
  inset: 5px 8px 5px 4px;
  border: 1px solid #35425f;
  border-radius: 5px;
  background: rgba(255, 255, 255, 0.08);
  box-shadow: 5px 0 0 #222f55;
}
.app svg { position: relative; }
.app.open::after, .app.active::after {
  content: "";
  position: absolute;
  bottom: 6px;
  width: 8px;
  height: 4px;
  border-radius: 2px;
  background: #9ba3b2;
}
.app.active::after { width: 20px; background: #b5b3b0; }
.tray { display: flex; flex: 1; align-items: center; justify-content: flex-end; gap: 10px; padding-right: 18px; }
.tray .icon17 { margin-right: 6px; }
.clock { margin-left: 16px; text-align: right; }
</style>
